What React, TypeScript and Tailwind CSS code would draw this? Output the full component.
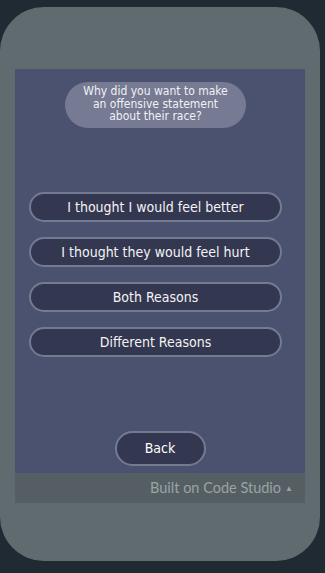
import React from "react";

const answers = [
  "I thought I would feel better",
  "I thought they would feel hurt",
  "Both Reasons",
  "Different Reasons",
];

export default function App() {
  return (
    <div className="w-[325px] h-[573px] bg-[#1f2a33] pt-[7px] overflow-hidden">
      <div className="w-[320px] h-[554px] bg-[#5f6b6f] rounded-[44px] pt-[62px] pl-[15px]">
        <div className="w-[290px] h-[404px] bg-[#4b5270] flex flex-col pt-[13px] font-['DejaVu_Sans_Condensed','DejaVu_Sans',sans-serif] text-white">
          <div className="ml-[50px] w-[181px] h-[46px] rounded-full bg-[#767a92] flex items-center justify-center text-center text-[12px] leading-[12.5px] px-1 pb-[2px] text-[#f1f1f5]">
            Why did you want to make
            <br />
            an offensive statement
            <br />
            about their race?
          </div>
          <div className="flex flex-col gap-[15px] mt-[64px] ml-[14px]">
            {answers.map((a) => (
              <div
                key={a}
                className="w-[253px] h-[30px] rounded-full bg-[#33374f] border-2 border-[#737b92] flex items-center justify-center text-[14px] text-[#f3f3f5]"
              >
                {a}
              </div>
            ))}
          </div>
          <div className="self-center mt-[74px] w-[91px] h-[35px] rounded-full bg-[#33374f] border-2 border-[#737b92] flex items-center justify-center text-[14px]">
            Back
          </div>
        </div>
        <div className="w-[290px] h-[30px] bg-[#555f63] flex items-center justify-end pr-[12px] gap-[4px] text-[14.5px] text-[#9aa3a6] font-['Lato',sans-serif]">
          <span>Built on Code Studio</span>
          <span className="text-[8px]">▲</span>
        </div>
      </div>
    </div>
  );
}
